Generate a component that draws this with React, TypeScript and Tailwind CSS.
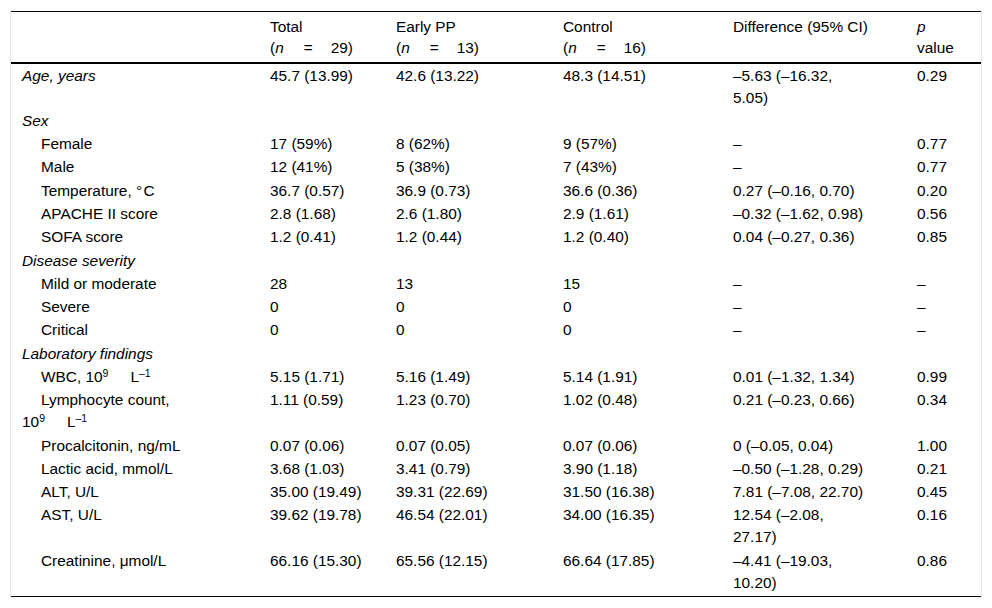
import * as React from "react"

type Row = {
    label: React.ReactNode
    kind: "group" | "item" | "wrap"
    cells?: React.ReactNode[]
}

const Gap: React.FC<{ w: string }> = ({ w }) => <span className={`inline-block ${w}`} />

const perL = (
    <>
        10<sup className="text-[10.5px]">9</sup>
        <span className="inline-block w-[22px]" />
        L<sup className="text-[10.5px]">–1</sup>
    </>
)

const ROWS: Row[] = [
    { label: "Age, years", kind: "group", cells: ["45.7 (13.99)", "42.6 (13.22)", "48.3 (14.51)", <>–5.63 (–16.32,<br />5.05)</>, "0.29"] },
    { label: "Sex", kind: "group" },
    { label: "Female", kind: "item", cells: ["17 (59%)", "8 (62%)", "9 (57%)", "–", "0.77"] },
    { label: "Male", kind: "item", cells: ["12 (41%)", "5 (38%)", "7 (43%)", "–", "0.77"] },
    { label: <>Temperature, °&#8202;C</>, kind: "item", cells: ["36.7 (0.57)", "36.9 (0.73)", "36.6 (0.36)", "0.27 (–0.16, 0.70)", "0.20"] },
    { label: "APACHE II score", kind: "item", cells: ["2.8 (1.68)", "2.6 (1.80)", "2.9 (1.61)", "–0.32 (–1.62, 0.98)", "0.56"] },
    { label: "SOFA score", kind: "item", cells: ["1.2 (0.41)", "1.2 (0.44)", "1.2 (0.40)", "0.04 (–0.27, 0.36)", "0.85"] },
    { label: "Disease severity", kind: "group" },
    { label: "Mild or moderate", kind: "item", cells: ["28", "13", "15", "–", "–"] },
    { label: "Severe", kind: "item", cells: ["0", "0", "0", "–", "–"] },
    { label: "Critical", kind: "item", cells: ["0", "0", "0", "–", "–"] },
    { label: "Laboratory findings", kind: "group" },
    { label: <>WBC, {perL}</>, kind: "item", cells: ["5.15 (1.71)", "5.16 (1.49)", "5.14 (1.91)", "0.01 (–1.32, 1.34)", "0.99"] },
    { label: <>Lymphocyte count,<br />{perL}</>, kind: "wrap", cells: ["1.11 (0.59)", "1.23 (0.70)", "1.02 (0.48)", "0.21 (–0.23, 0.66)", "0.34"] },
    { label: "Procalcitonin, ng/mL", kind: "item", cells: ["0.07 (0.06)", "0.07 (0.05)", "0.07 (0.06)", "0 (–0.05, 0.04)", "1.00"] },
    { label: "Lactic acid, mmol/L", kind: "item", cells: ["3.68 (1.03)", "3.41 (0.79)", "3.90 (1.18)", "–0.50 (–1.28, 0.29)", "0.21"] },
    { label: "ALT, U/L", kind: "item", cells: ["35.00 (19.49)", "39.31 (22.69)", "31.50 (16.38)", "7.81 (–7.08, 22.70)", "0.45"] },
    { label: "AST, U/L", kind: "item", cells: ["39.62 (19.78)", "46.54 (22.01)", "34.00 (16.35)", <>12.54 (–2.08,<br />27.17)</>, "0.16"] },
    { label: "Creatinine, μmol/L", kind: "item", cells: ["66.16 (15.30)", "65.56 (12.15)", "66.64 (17.85)", <>–4.41 (–19.03,<br />10.20)</>, "0.86"] },
]

const NCount: React.FC<{ n: string }> = ({ n }) => (
    <>
        (<i>n</i>
        <Gap w="w-[20px]" />=<Gap w="w-[18px]" />
        {n})
    </>
)

export default function App() {
    return (
        <div className="min-h-[608px] bg-white pt-[11px] font-['Liberation_Sans',Arial,sans-serif] text-[15.4px] text-black">
            <div className="ml-[10px] w-[972px] border-x border-[#e6e6e6]">
                <table className="w-[970px] table-fixed border-collapse">
                    <colgroup>
                        <col className="w-[248px]" />
                        <col className="w-[126px]" />
                        <col className="w-[167px]" />
                        <col className="w-[170px]" />
                        <col className="w-[184px]" />
                        <col className="w-[75px]" />
                    </colgroup>
                    <thead>
                        <tr className="border-t border-b-2 border-black text-left align-top leading-[21px]">
                            <th className="pl-[11px] pt-[4px] pb-[4px] font-normal" />
                            <th className="pl-[11px] pt-[4px] pb-[4px] font-normal whitespace-nowrap">
                                Total<br /><NCount n="29" />
                            </th>
                            <th className="pl-[11px] pt-[4px] pb-[4px] font-normal whitespace-nowrap">
                                Early PP<br /><NCount n="13" />
                            </th>
                            <th className="pl-[11px] pt-[4px] pb-[4px] font-normal whitespace-nowrap">
                                Control<br /><NCount n="16" />
                            </th>
                            <th className="pl-[11px] pt-[4px] pb-[4px] font-normal whitespace-nowrap">
                                Difference (95% CI)
                            </th>
                            <th className="pl-[11px] pt-[4px] pb-[4px] font-normal whitespace-nowrap">
                                <i>p</i><br />value
                            </th>
                        </tr>
                    </thead>
                    <tbody className="border-b border-black">
                        {ROWS.map((row, i) => {
                            // last row keeps a little room above the closing rule
                            const pad = i === ROWS.length - 1 ? "pt-[0.65px] pb-[2.5px]" : "py-[0.65px]"
                            return (
                                <tr key={i} className="align-top leading-[22px]">
                                    <td
                                        className={
                                            row.kind === "group"
                                                ? `pl-[11px] ${pad} italic whitespace-nowrap`
                                                : row.kind === "wrap"
                                                ? `pl-[11px] ${pad} indent-[19px] whitespace-nowrap`
                                                : `pl-[30px] ${pad} whitespace-nowrap`
                                        }
                                    >
                                        {row.label}
                                    </td>
                                    {(row.cells ?? ["", "", "", "", ""]).map((c, j) => (
                                        <td key={j} className={`pl-[11px] ${pad} whitespace-nowrap`}>
                                            {c}
                                        </td>
                                    ))}
                                </tr>
                            )
                        })}
                    </tbody>
                </table>
            </div>
        </div>
    )
}
